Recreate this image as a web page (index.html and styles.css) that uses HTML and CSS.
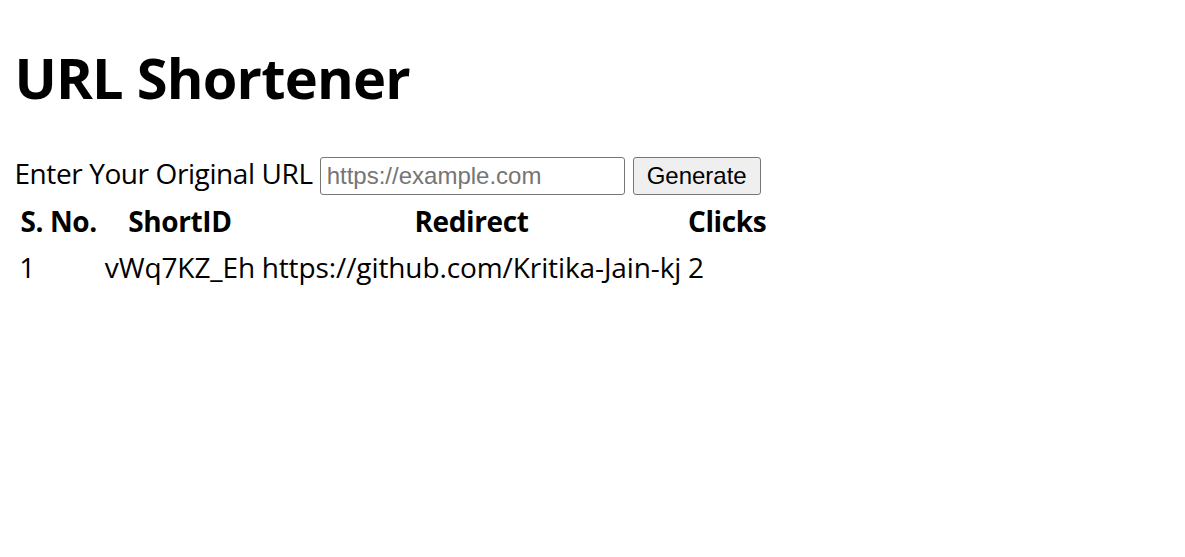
FILE: index.html
```html
<!DOCTYPE html>
<html lang="en">
<head>
<meta charset="utf-8">
<title>URL Shortener</title>
<link rel="stylesheet" href="styles.css">
</head>
<body>
<h1 class="title">URL Shortener</h1>
<form class="url-form">
  <label class="url-label" for="url">Enter Your Original URL</label>
  <input class="url-input" id="url" type="text" placeholder="https://example.com">
  <button class="btn" type="button">Generate</button>
</form>
<table class="links">
  <thead>
    <tr>
      <th class="col-no">S. No.</th>
      <th class="col-id">ShortID</th>
      <th class="col-url">Redirect</th>
      <th class="col-clicks">Clicks</th>
    </tr>
  </thead>
  <tbody>
    <tr>
      <td>1</td>
      <td>vWq7KZ_Eh</td>
      <td>https://github.com/Kritika-Jain-kj</td>
      <td>2</td>
    </tr>
  </tbody>
</table>
</body>
</html>
```
FILE: styles.css
```css
html, body {
  background: #ffffff;
}
body {
  margin: 0;
  padding: 0 14.4px;
  font-family: "Open Sans", "Noto Sans", sans-serif;
  font-size: 28px;
  letter-spacing: -0.4px;
  line-height: 38.3px;
  color: #000000;
}
.title {
  margin: 38.6px 0;
  font-size: 56px;
  letter-spacing: -0.8px;
  line-height: 76.6px;
  font-weight: 700;
}
.url-form {
  display: flex;
  align-items: baseline;
  margin: 0;
}
.url-label {
  margin-right: 7px;
}
.url-input {
  box-sizing: border-box;
  width: 305px;
  height: 38px;
  padding: 1px 6px;
  margin: 0 8px 0 0;
  border: 1px solid #767676;
  border-radius: 3px;
  background: #ffffff;
  font-family: "Liberation Sans", Arial, sans-serif;
  font-size: 24px;
  letter-spacing: 0;
  color: #000000;
}
.url-input::placeholder {
  color: #757575;
}
.btn {
  box-sizing: border-box;
  width: 128px;
  height: 38px;
  padding: 1px 6px;
  margin: 0;
  border: 1px solid #767676;
  border-radius: 3px;
  background: #efefef;
  font-family: "Liberation Sans", Arial, sans-serif;
  font-size: 24px;
  letter-spacing: 0;
  color: #000000;
}
.links {
  border-collapse: separate;
  border-spacing: 3.6px;
  margin: 1px 0 0 0;
}
.links th,
.links td {
  padding: 1.8px;
  line-height: 40.3px;
  white-space: nowrap;
}
.links th {
  font-weight: 700;
  text-align: center;
}
.links td {
  text-align: left;
  letter-spacing: -0.1px;
}
.col-no { width: 79px; }
.col-id { width: 148px; }
.col-url { width: 419px; }
.col-clicks { width: 77px; }
```
